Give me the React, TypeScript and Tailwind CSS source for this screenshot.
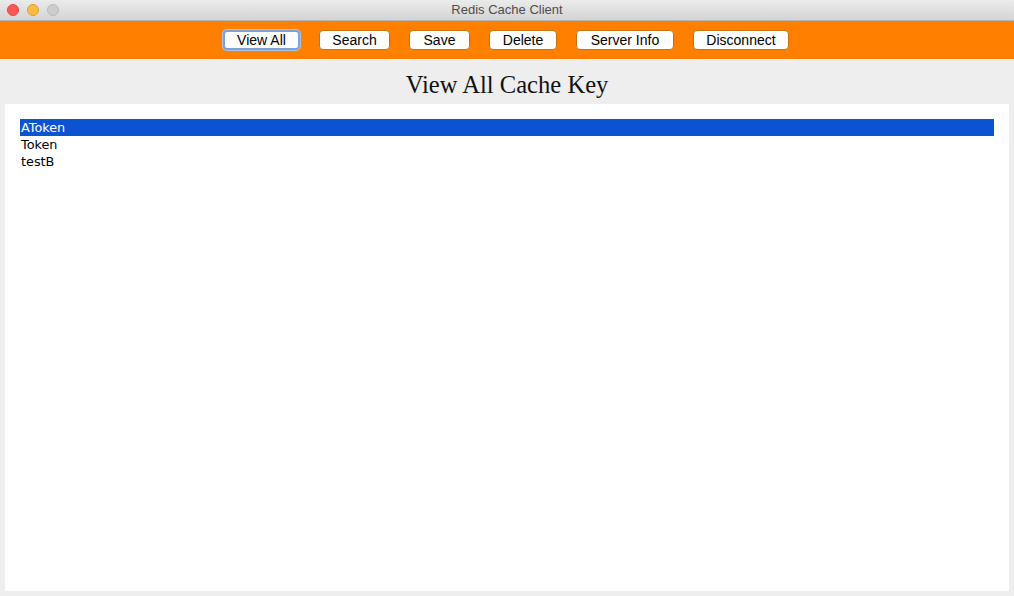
import { useState } from "react";

const buttons = ["View All", "Search", "Save", "Delete", "Server Info", "Disconnect"];
const widths: Record<string, string> = {
  "View All": "w-[77px]",
  Search: "w-[71px]",
  Save: "w-[61px]",
  Delete: "w-[68px]",
  "Server Info": "w-[98px]",
  Disconnect: "w-[96px]",
};

const keys = ["AToken", "Token", "testB"];

export default function App() {
  const [selected, setSelected] = useState("AToken");

  return (
    <div className="w-[1014px] h-[596px] flex flex-col bg-[#eeeeee] overflow-hidden">
      {/* window title bar */}
      <div className="relative h-[21px] flex items-center justify-center bg-gradient-to-b from-[#ebebeb] to-[#d4d4d4] border-b border-[#b5b5b5]">
        <div className="absolute left-[7px] top-[4px] flex gap-[8px]">
          <span className="w-[12px] h-[12px] rounded-full bg-[#fc5753] border border-[#df4744]" />
          <span className="w-[12px] h-[12px] rounded-full bg-[#fdbc40] border border-[#de9f34]" />
          <span className="w-[12px] h-[12px] rounded-full bg-[#cdcdcd] border border-[#b9b9b9]" />
        </div>
        <span className="text-[13px] text-[#4d4d4d] font-['Liberation_Sans',sans-serif]">
          Redis Cache Client
        </span>
      </div>

      {/* toolbar */}
      <div className="h-[38px] flex items-center justify-center gap-[19px] bg-[#ff8000] pr-[2px]">
        {buttons.map((b) => (
          <button
            key={b}
            className={
              "h-[20px] rounded-[4px] bg-white text-[14px] leading-none text-black font-['Liberation_Sans',sans-serif] " +
              widths[b] +
              (b === "View All"
                ? " border-2 border-[#7da2d6] shadow-[0_0_0_1px_#a9c3e8]"
                : " border border-[#c5720f]")
            }
          >
            {b}
          </button>
        ))}
      </div>

      {/* heading */}
      <div className="h-[45px] flex items-center justify-center">
        <h1 className="text-[24.6px] text-[#111] font-['Liberation_Serif',serif] pt-[8px]">
          View All Cache Key
        </h1>
      </div>

      {/* list */}
      <div className="flex-1 mx-[5px] mb-[5px] bg-white pt-[15px] px-[15px]">
        <ul className="font-['DejaVu_Sans',sans-serif] text-[12.8px]">
          {keys.map((k) => (
            <li
              key={k}
              onClick={() => setSelected(k)}
              className={
                "h-[17px] leading-[18px] pl-[1px] cursor-default " +
                (selected === k ? "bg-[#0b53d0] text-white" : "text-black")
              }
            >
              {k}
            </li>
          ))}
        </ul>
      </div>
    </div>
  );
}
